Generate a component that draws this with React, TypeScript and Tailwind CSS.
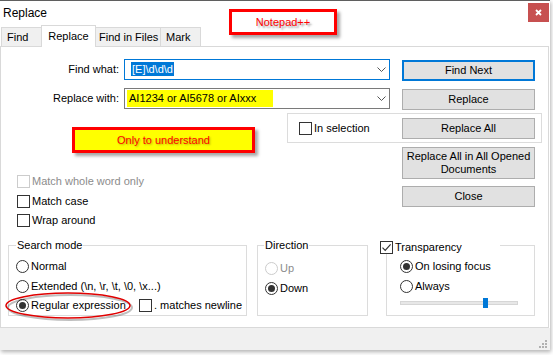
import React from 'react';

const ui = "font-['Liberation_Sans',Arial,sans-serif] text-[11px] leading-[13px] text-black";

function Checkbox({ checked = false, disabled = false }: { checked?: boolean; disabled?: boolean }) {
  return (
    <span
      className={`flex h-[13px] w-[13px] shrink-0 items-center justify-center border bg-white ${
        disabled ? 'border-[#cccccc]' : 'border-[#333333]'
      }`}
    >
      {checked && (
        <svg width="11" height="11" viewBox="0 0 11 11">
          <path d="M1.5 5.6 L4.2 8.4 L9.6 2.4" fill="none" stroke="#333" strokeWidth="1.2" />
        </svg>
      )}
    </span>
  );
}

function Radio({ checked = false, disabled = false }: { checked?: boolean; disabled?: boolean }) {
  return (
    <span
      className={`flex h-[13px] w-[13px] shrink-0 items-center justify-center rounded-full border bg-white ${
        disabled ? 'border-[#cccccc]' : 'border-[#333333]'
      }`}
    >
      {checked && <span className="h-[7px] w-[7px] rounded-full bg-[#333333]" />}
    </span>
  );
}

function Btn({ children, primary = false, tall = false }: { children: React.ReactNode; primary?: boolean; tall?: boolean }) {
  return (
    <div
      className={`flex w-[133px] shrink-0 items-center justify-center bg-[#e1e1e1] text-center ${
        tall ? 'h-[32px]' : 'h-[21px]'
      } ${primary ? 'border-2 border-[#0078d7]' : 'border border-[#adadad]'}`}
    >
      {children}
    </div>
  );
}

function Combo({ children, focused = false }: { children: React.ReactNode; focused?: boolean }) {
  return (
    <div
      className={`ml-[5px] flex h-[21px] w-[266px] items-center border bg-white pl-[2px] pr-[3px] ${
        focused ? 'border-[#0078d7]' : 'border-[#7a7a7a]'
      }`}
    >
      <div className="flex-1">{children}</div>
      <svg width="9" height="5" viewBox="0 0 9 5">
        <path d="M0.5 0.5 L4.5 4.5 L8.5 0.5" fill="none" stroke="#555" strokeWidth="1" />
      </svg>
    </div>
  );
}

function Option({ control, label, gray = false }: { control: React.ReactNode; label: string; gray?: boolean }) {
  return (
    <div className="flex h-[13px] items-center">
      {control}
      <span className={`ml-[2px] whitespace-nowrap ${gray ? 'text-[#8c8c8c]' : ''}`}>{label}</span>
    </div>
  );
}

export default function App() {
  return (
    <div className="h-[355px] w-[553px] overflow-hidden bg-white">
      <div className={`relative flex h-[350px] w-[550px] flex-col border-t border-[#5f5f5f] bg-white shadow-[1px_2px_4px_rgba(0,0,0,0.3)] ${ui}`}>
        {/* title bar */}
        <div className="flex h-[24px] items-start justify-between">
          <span className="pl-[3px] pt-[5px] text-[12px] leading-[15px]">Replace</span>
          <div className="mr-[1px] mt-[2px] flex h-[19px] w-[21px] items-center justify-center bg-[#c75050]">
            <svg width="7" height="7" viewBox="0 0 7 7">
              <path d="M1 1 L6 6 M6 1 L1 6" stroke="#fff" strokeWidth="1.8" />
            </svg>
          </div>
        </div>

        {/* tabs */}
        <div className="flex h-[21px] items-end pl-[1px]">
          <div className="h-[19px] w-[40px] border-l border-t border-[#d9d9d9] bg-[#f0f0f0] pl-[5px] pt-[3px]">Find</div>
          <div className="relative z-10 -mb-[1px] h-[22px] w-[55px] border-x border-t border-[#d9d9d9] bg-white pt-[4px] text-center">
            Replace
          </div>
          <div className="h-[19px] w-[65px] border-r border-t border-[#d9d9d9] bg-[#f0f0f0] pl-[3px] pt-[3px]">Find in Files</div>
          <div className="h-[19px] w-[40px] border-r border-t border-[#d9d9d9] bg-[#f0f0f0] pl-[5px] pt-[3px]">Mark</div>
        </div>

        {/* tab panel */}
        <div className="mr-[1px] flex-1 border border-[#d9d9d9] bg-white">
          <div className="mt-[12px] flex items-start">
            <span className="w-[118px] text-right leading-[21px]">Find what:</span>
            <Combo focused>
              <span className="ml-[4px] bg-[#0078d7] px-[1px] py-[1px] text-white">[E]\d\d\d</span>
            </Combo>
            <div className="ml-[12px] mt-[1px]">
              <Btn primary>Find Next</Btn>
            </div>
          </div>

          <div className="mt-[7px] flex items-start">
            <span className="w-[118px] text-right leading-[21px]">Replace with:</span>
            <Combo>
              <span className="inline-block w-[146px] bg-[#ffff00] py-[2px] pl-[2px]">AI1234 or AI5678 or AIxxx</span>
            </Combo>
            <div className="ml-[12px] mt-[1px]">
              <Btn>Replace</Btn>
            </div>
          </div>

          <div className="ml-[286px] mt-[3px] flex h-[30px] w-[255px] items-center border border-[#dcdcdc]">
            <div className="w-[114px] pl-[11px]">
              <Option control={<Checkbox />} label="In selection" />
            </div>
            <Btn>Replace All</Btn>
          </div>

          <div className="mt-[4px] flex items-start">
            <div className="w-[401px] pl-[16px] pt-[28px]">
              <Option control={<Checkbox disabled />} label="Match whole word only" gray />
              <div className="mt-[7px]">
                <Option control={<Checkbox />} label="Match case" />
              </div>
              <div className="mt-[6px]">
                <Option control={<Checkbox />} label="Wrap around" />
              </div>
            </div>
            <div className="flex flex-col gap-[7px]">
              <Btn tall>
                Replace All in All Opened
                <br />
                Documents
              </Btn>
              <Btn>Close</Btn>
            </div>
          </div>

          <div className="mt-[18px] flex items-start">
            {/* search mode */}
            <div className="relative ml-[7px] h-[71px] w-[239px] border border-[#dcdcdc] pl-[7px] pt-[14px]">
              <span className="absolute -top-[7px] left-[7px] bg-white px-[1px]">Search mode</span>
              <Option control={<Radio />} label="Normal" />
              <div className="mt-[7px]">
                <Option control={<Radio />} label="Extended (\n, \r, \t, \0, \x...)" />
              </div>
              <div className="mt-[6px] flex items-center">
                <div className="w-[123px]">
                  <Option control={<Radio checked />} label="Regular expression" />
                </div>
                <Option control={<Checkbox />} label=". matches newline" />
              </div>
            </div>

            {/* direction */}
            <div className="relative ml-[10px] h-[71px] w-[111px] border border-[#dcdcdc] pl-[7px] pt-[16px]">
              <span className="absolute -top-[7px] left-[6px] bg-white px-[1px]">Direction</span>
              <Option control={<Radio disabled />} label="Up" gray />
              <div className="mt-[7px]">
                <Option control={<Radio checked />} label="Down" />
              </div>
            </div>

            {/* transparency */}
            <div className="relative ml-[18px] h-[71px] w-[149px] border border-[#dcdcdc] pl-[13px] pt-[14px]">
              <div className="absolute -left-[7px] -top-[5px] w-[120px] bg-white">
                <Option control={<Checkbox checked />} label="Transparency" />
              </div>
              <Option control={<Radio checked />} label="On losing focus" />
              <div className="mt-[7px]">
                <Option control={<Radio />} label="Always" />
              </div>
              <svg className="mt-[5px] block" width="119" height="10" viewBox="0 0 119 10">
                <rect x="0.5" y="3.5" width="117" height="3" fill="#e7e7e7" stroke="#d6d6d6" />
                <rect x="83" y="0" width="5" height="10" fill="#0078d7" />
              </svg>
            </div>
          </div>
        </div>

        {/* bottom strip */}
        <div className="flex h-[22px] items-end justify-end bg-[#f0f0f0] pb-[1px] pr-[2px]">
          <svg width="9" height="9" viewBox="0 0 9 9" fill="#b0b0b0">
            <rect x="6" y="0" width="2" height="2" />
            <rect x="3" y="3" width="2" height="2" />
            <rect x="6" y="3" width="2" height="2" />
            <rect x="0" y="6" width="2" height="2" />
            <rect x="3" y="6" width="2" height="2" />
            <rect x="6" y="6" width="2" height="2" />
          </svg>
        </div>

        {/* annotations */}
        <div className="absolute left-[229px] top-[8px] flex h-[26px] w-[108px] items-center justify-center border-[3px] border-[#ff0000] bg-white text-[#ff0000] shadow-[3px_3px_3px_rgba(0,0,0,0.35)] [text-shadow:2px_2px_2px_rgba(0,0,0,0.35)]">
          Notepad++
        </div>
        <div className="absolute left-[72px] top-[126px] flex h-[26px] w-[183px] items-center justify-center border-[3px] border-[#ff0000] bg-[#ffff00] text-[#ff0000] shadow-[3px_3px_3px_rgba(0,0,0,0.35)] [text-shadow:1px_1px_2px_rgba(0,0,0,0.3)]">
          Only to understand
        </div>
        <svg className="absolute left-0 top-[286px]" width="140" height="36" viewBox="0 0 140 36">
          <ellipse cx="70" cy="20.5" rx="62" ry="12.5" fill="none" stroke="rgba(0,0,0,0.25)" strokeWidth="2" />
          <ellipse cx="68" cy="18.5" rx="62" ry="12.5" fill="none" stroke="#e00000" strokeWidth="1.5" />
        </svg>
      </div>
    </div>
  );
}
